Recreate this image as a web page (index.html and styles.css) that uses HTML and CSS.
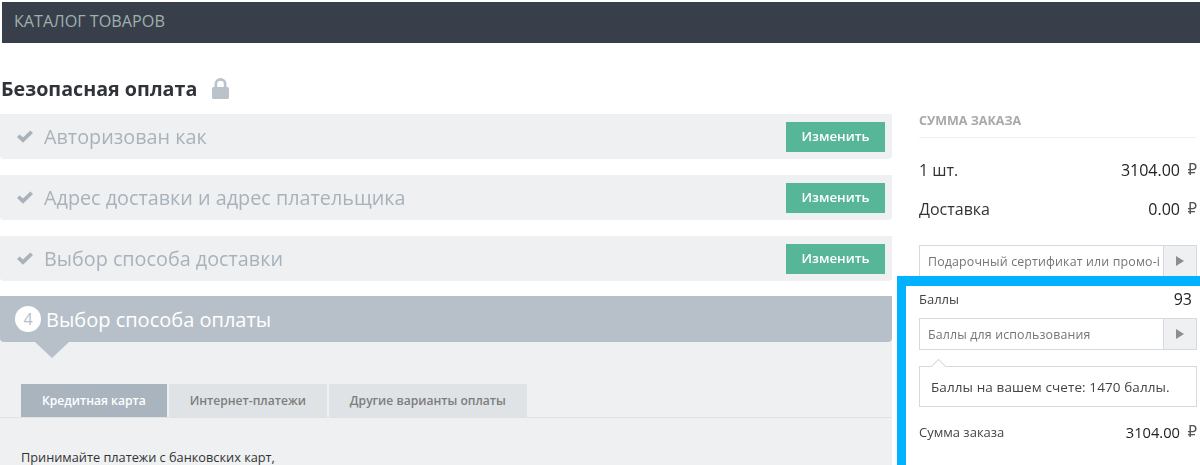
FILE: index.html
```html
<!DOCTYPE html>
<html lang="ru">
<head>
<meta charset="utf-8">
<title>Безопасная оплата</title>
<link rel="stylesheet" href="styles.css">
</head>
<body>
<header class="topbar">КАТАЛОГ ТОВАРОВ</header>
<div class="page">
  <main class="main">
    <h1 class="title">Безопасная оплата
      <svg class="lock" width="17" height="21" viewBox="0 0 17 21"><path fill="#bac2cb" d="M2.500 9V6a6 6 0 0 1 12 0V9h1A1.500 1.500 0 0 1 17 10.500V19.500A1.500 1.500 0 0 1 15.500 21H1.500A1.500 1.500 0 0 1 0 19.500V10.500A1.500 1.500 0 0 1 1.500 9ZM5.200 9h6.600V6a3.300 3.300 0 0 0-6.600 0Z"/></svg>
    </h1>
    <section class="step">
      <svg class="check" width="16" height="13" viewBox="0 0 16 13"><path fill="#a9b2bb" d="M0 7l2.600-2.600L6 7.600 13.300.5 16 3.100 6 12.700Z"/></svg>
      <span class="step-name">Авторизован как</span>
      <a class="change">Изменить</a>
    </section>
    <section class="step">
      <svg class="check" width="16" height="13" viewBox="0 0 16 13"><path fill="#a9b2bb" d="M0 7l2.600-2.600L6 7.600 13.300.5 16 3.100 6 12.700Z"/></svg>
      <span class="step-name">Адрес доставки и адрес плательщика</span>
      <a class="change">Изменить</a>
    </section>
    <section class="step">
      <svg class="check" width="16" height="13" viewBox="0 0 16 13"><path fill="#a9b2bb" d="M0 7l2.600-2.600L6 7.600 13.300.5 16 3.100 6 12.700Z"/></svg>
      <span class="step-name">Выбор способа доставки</span>
      <a class="change">Изменить</a>
    </section>
    <section class="active">
      <div class="active-head"><span class="num">4</span><span class="active-name">Выбор способа оплаты</span></div>
      <div class="tabs">
        <span class="tab tab-on">Кредитная карта</span>
        <span class="tab">Интернет-платежи</span>
        <span class="tab">Другие варианты оплаты</span>
      </div>
      <p class="pay-text">Принимайте платежи с банковских карт,</p>
    </section>
  </main>
  <aside class="side">
    <h2 class="side-title">СУММА ЗАКАЗА</h2>
    <div class="row row-big row-first"><span>1 шт.</span><span class="amount">3104.00<span class="rub">₽</span></span></div>
    <div class="row row-big row-second"><span>Доставка</span><span class="amount">0.00<span class="rub">₽</span></span></div>
    <div class="field field-cut"><span class="field-text">Подарочный сертификат или промо-і</span><span class="field-btn"><i class="play"></i></span></div>
    <div class="mark">
      <div class="row row-points"><span>Баллы</span><span class="points">93</span></div>
      <div class="field"><span class="field-text">Баллы для использования</span><span class="field-btn"><i class="play"></i></span></div>
      <div class="note">Баллы на вашем счете: 1470 баллы.</div>
      <div class="row row-total"><span>Сумма заказа</span><span class="amount amount-total">3104.00<span class="rub">₽</span></span></div>
    </div>
  </aside>
</div>
</body>
</html>
```
FILE: styles.css
```css
* { box-sizing: border-box; }
html, body { margin: 0; padding: 0; }
body {
  width: 1200px;
  height: 465px;
  overflow: hidden;
  background: #fff;
  font-family: "Open Sans", "Noto Sans", sans-serif;
  color: #333;
  filter: blur(.35px);
}
.topbar {
  height: 41px;
  margin: 2px 0 0 2px;
  padding-left: 12px;
  background: #383f4a;
  color: #9fb0ad;
  font-size: 16.200px;
  line-height: 38px;
}
.page { display: flex; height: 422px; overflow: hidden; }
.main { width: 892px; flex: none; }
.title {
  display: flex;
  align-items: center;
  gap: 15px;
  height: 71px;
  margin: 0;
  padding: 19px 0 0 1px;
  font-size: 19.700px;
  font-weight: 700;
  color: #30343a;
}
.lock { flex: none; }
.step {
  display: flex;
  align-items: center;
  height: 45px;
  margin-bottom: 16px;
  padding: 0 7px 0 17px;
  background: #eef0f2;
  border-radius: 0 0 4px 4px;
}
.check { flex: none; margin-right: 11px; }
.step-name { flex: 1; font-size: 19.800px; color: #a9b2bb; }
.change {
  width: 99px;
  height: 30px;
  background: #58b698;
  color: #fff;
  font-size: 13.300px;
  font-weight: 600;
  line-height: 29px;
  text-align: center;
}
.active { height: 170px; margin-top: -1px; background: #eef0f2; overflow: hidden; }
.active-head {
  display: flex;
  align-items: center;
  height: 46px;
  padding-left: 15px;
  background: #b7c0c9;
  border-radius: 0 0 4px 4px;
  color: #fff;
  position: relative;
}
.active-head::after {
  content: "";
  position: absolute;
  left: 35px;
  top: 46px;
  border-style: solid;
  border-width: 16px 17px 0;
  border-color: #b7c0c9 transparent transparent;
}
.num {
  width: 26px;
  height: 26px;
  margin-right: 5px;
  border-radius: 50%;
  background: #fff;
  color: #b7c0c9;
  font-size: 16px;
  line-height: 26px;
  text-align: center;
}
.active-name { font-size: 20px; font-weight: 500; }
.tabs {
  display: flex;
  gap: 2px;
  height: 34px;
  margin-top: 42px;
  padding-left: 21px;
  border-bottom: 1px solid #dfe3e6;
}
.tab {
  height: 33px;
  padding: 0 21px;
  background: #dfe3e6;
  color: #7d7d7d;
  font-size: 12.100px;
  font-weight: 600;
  line-height: 33px;
}
.tab-on { background: #aab4be; color: #fff; }
.pay-text { margin: 30px 0 0 21px; font-size: 12.750px; line-height: 18px; color: #333; }
.side { width: 308px; padding: 0 3px 0 27px; flex: none; }
.side-title {
  height: 95px;
  margin: 0;
  padding-top: 70px;
  border-bottom: 1px solid #f0f1f3;
  font-size: 12.500px;
  font-weight: 700;
  line-height: 16px;
  color: #a8a8a8;
}
.row { display: flex; justify-content: space-between; align-items: center; }
.row-big { font-size: 16px; height: 22px; color: #333; }
.row-first { margin-top: 21px; }
.row-second { margin-top: 17px; }
.amount { display: flex; align-items: center; font-size: 16px; color: #222; }
.amount-total { font-size: 14.700px; }
.rub {
  width: 17px;
  font-family: "DejaVu Sans", sans-serif;
  font-size: 15px;
  color: #555;
  text-align: right;
}
.field {
  display: flex;
  width: 278px;
  height: 32px;
  border: 1px solid #d5dade;
  background: #fff;
}
.field-cut { height: 31px; margin-top: 25px; border-bottom: 0; }
.field-text {
  flex: 1;
  overflow: hidden;
  padding-left: 8px;
  font-size: 12.400px;
  line-height: 32px;
  letter-spacing: .15px;
  color: #757575;
  white-space: nowrap;
}
.field-btn {
  display: flex;
  align-items: center;
  justify-content: center;
  width: 33px;
  flex: none;
  background: #eef0f2;
  border-left: 1px solid #d5dade;
}
.play {
  border-style: solid;
  border-width: 5px 0 5px 8px;
  border-color: transparent transparent transparent #8a8f94;
}
.mark {
  width: 303px;
  height: 189px;
  margin-left: -22px;
  padding: 0 3px 0 13px;
  border-left: 9px solid #00b2ff;
  border-top: 10px solid #00b2ff;
  background: #fff;
}
.row-points { height: 32px; padding: 0 5px 7px 0; font-size: 13px; color: #444; }
.points { font-size: 16px; color: #222; }
.note {
  width: 278px;
  height: 41px;
  margin-top: 16px;
  border: 1px solid #d5dade;
  padding-left: 11px;
  font-size: 13.500px;
  line-height: 40px;
  letter-spacing: .1px;
  color: #444;
  position: relative;
}
.note::before {
  content: "";
  position: absolute;
  left: 13px;
  top: -6px;
  width: 10px;
  height: 10px;
  background: #fff;
  border-left: 1px solid #d5dade;
  border-top: 1px solid #d5dade;
  transform: rotate(45deg);
}
.row-total { width: 278px; height: 20px; margin-top: 15px; font-size: 13px; color: #444; }
```
